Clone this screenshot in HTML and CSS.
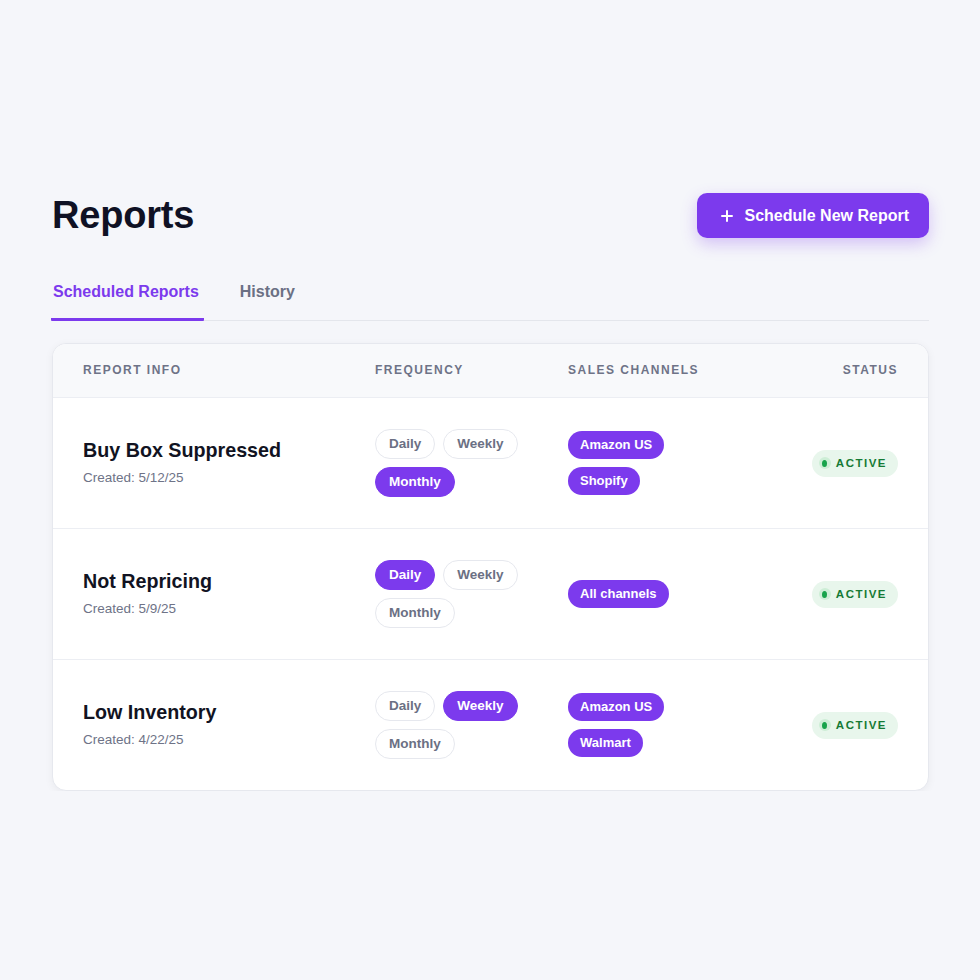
FILE: index.html
```html
<!DOCTYPE html>
<html lang="en">
<head>
<meta charset="utf-8">
<title>Reports</title>
<link rel="stylesheet" href="styles.css">
</head>
<body>
<main class="page">
  <header class="top">
    <h1 class="title">Reports</h1>
    <button class="btn-primary" type="button">
      <svg class="btn-icon" width="12" height="12" viewBox="0 0 12 12" aria-hidden="true"><path d="M6 1v10M1 6h10" stroke="#fff" stroke-width="2" stroke-linecap="round" fill="none"/></svg>
      <span>Schedule New Report</span>
    </button>
  </header>

  <nav class="tabs">
    <a class="tab tab-active">Scheduled Reports</a>
    <a class="tab">History</a>
  </nav>

  <section class="card">
    <div class="row row-head">
      <div class="th">Report Info</div>
      <div class="th">Frequency</div>
      <div class="th">Sales Channels</div>
      <div class="th th-right">Status</div>
    </div>

    <div class="row">
      <div class="info">
        <div class="name">Buy Box Suppressed</div>
        <div class="created">Created: 5/12/25</div>
      </div>
      <div class="freq">
        <span class="pill">Daily</span>
        <span class="pill">Weekly</span>
        <span class="pill pill-on">Monthly</span>
      </div>
      <div class="channels">
        <span class="chan">Amazon US</span>
        <span class="chan">Shopify</span>
      </div>
      <div class="status"><span class="badge"><span class="dot"><span class="dot-in"></span></span>ACTIVE</span></div>
    </div>

    <div class="row">
      <div class="info">
        <div class="name">Not Repricing</div>
        <div class="created">Created: 5/9/25</div>
      </div>
      <div class="freq">
        <span class="pill pill-on">Daily</span>
        <span class="pill">Weekly</span>
        <span class="pill">Monthly</span>
      </div>
      <div class="channels">
        <span class="chan">All channels</span>
      </div>
      <div class="status"><span class="badge"><span class="dot"><span class="dot-in"></span></span>ACTIVE</span></div>
    </div>

    <div class="row">
      <div class="info">
        <div class="name">Low Inventory</div>
        <div class="created">Created: 4/22/25</div>
      </div>
      <div class="freq">
        <span class="pill">Daily</span>
        <span class="pill pill-on">Weekly</span>
        <span class="pill">Monthly</span>
      </div>
      <div class="channels">
        <span class="chan">Amazon US</span>
        <span class="chan">Walmart</span>
      </div>
      <div class="status"><span class="badge"><span class="dot"><span class="dot-in"></span></span>ACTIVE</span></div>
    </div>
  </section>
</main>
</body>
</html>
```

FILE: styles.css
```css
* { box-sizing: border-box; }

html, body {
  margin: 0;
  padding: 0;
  background: #f5f6fa;
}

body {
  font-family: "Liberation Sans", Arial, Helvetica, sans-serif;
  color: #111322;
}

.page {
  padding: 193px 51px 0 52px;
}

.top {
  display: flex;
  align-items: center;
  justify-content: space-between;
  height: 45px;
}

.title {
  margin: 0;
  font-size: 38px;
  font-weight: 700;
  line-height: 41px;
  color: #0f1124;
  letter-spacing: -0.2px;
}

.btn-primary {
  display: flex;
  align-items: center;
  gap: 12px;
  height: 45px;
  padding: 0 20px 0 24px;
  border: none;
  border-radius: 10px;
  background: #7c3aed;
  color: #fff;
  font-family: inherit;
  font-size: 16px;
  font-weight: 700;
  box-shadow: 0 6px 16px rgba(124, 58, 237, 0.28);
}

.btn-icon { display: block; }

.tabs {
  display: flex;
  gap: 34px;
  margin-top: 44px;
  border-bottom: 1px solid #e4e6ec;
}

.tab {
  display: block;
  padding: 0 5px 16px 2px;
  margin-bottom: -1px;
  font-size: 16px;
  line-height: 20px;
  font-weight: 700;
  color: #6b7084;
  border-bottom: 3px solid transparent;
}

.tab-active {
  margin-left: -1px;
  color: #7c3aed;
  border-bottom-color: #7c3aed;
  border-radius: 0 0 1px 1px;
}

.card {
  margin-top: 22px;
  background: #fff;
  border: 1px solid #e6e8ee;
  border-radius: 14px;
  box-shadow: 0 2px 8px rgba(20, 24, 40, 0.05);
  overflow: hidden;
}

.row {
  display: grid;
  grid-template-columns: 292px 193px 1fr 140px;
  align-items: center;
  padding: 0 30px;
  min-height: 131px;
  border-top: 1px solid #eceef3;
}

.row-head {
  min-height: 53px;
  padding-bottom: 2px;
  border-top: none;
  background: #f8f9fb;
}

.th {
  font-size: 12px;
  font-weight: 700;
  letter-spacing: 1.5px;
  text-transform: uppercase;
  color: #6e7387;
}

.th-right { text-align: right; }

.name {
  font-size: 19.7px;
  line-height: 24px;
  font-weight: 700;
  color: #111322;
}

.created {
  margin-top: 6px;
  font-size: 13.5px;
  line-height: 20px;
  color: #6e7387;
}

.freq {
  display: flex;
  flex-wrap: wrap;
  gap: 8px;
}

.pill {
  display: inline-block;
  height: 30px;
  line-height: 28px;
  padding: 0 13px;
  border: 1px solid #e6e8ee;
  border-radius: 15px;
  background: #fff;
  font-size: 13.5px;
  font-weight: 700;
  color: #6b7084;
}

.pill-on {
  background: #7c3aed;
  border-color: #7c3aed;
  color: #fff;
}

.channels {
  display: flex;
  flex-direction: column;
  align-items: flex-start;
  gap: 8px;
}

.chan {
  display: inline-block;
  height: 28px;
  line-height: 28px;
  padding: 0 12px;
  border-radius: 14px;
  background: #7c3aed;
  color: #fff;
  font-size: 13px;
  font-weight: 700;
}

.status {
  display: flex;
  justify-content: flex-end;
}

.badge {
  display: inline-flex;
  align-items: center;
  gap: 5px;
  height: 27px;
  padding: 0 11px 0 7px;
  border-radius: 14px;
  background: #e8f6ec;
  color: #167a35;
  font-size: 11.5px;
  font-weight: 700;
  letter-spacing: 1.5px;
}

.dot {
  display: flex;
  align-items: center;
  justify-content: center;
  width: 12px;
  height: 12px;
  border-radius: 50%;
  background: #cdeed6;
}

.dot-in {
  width: 5px;
  height: 7px;
  border-radius: 50%;
  background: #16a34a;
}
```
